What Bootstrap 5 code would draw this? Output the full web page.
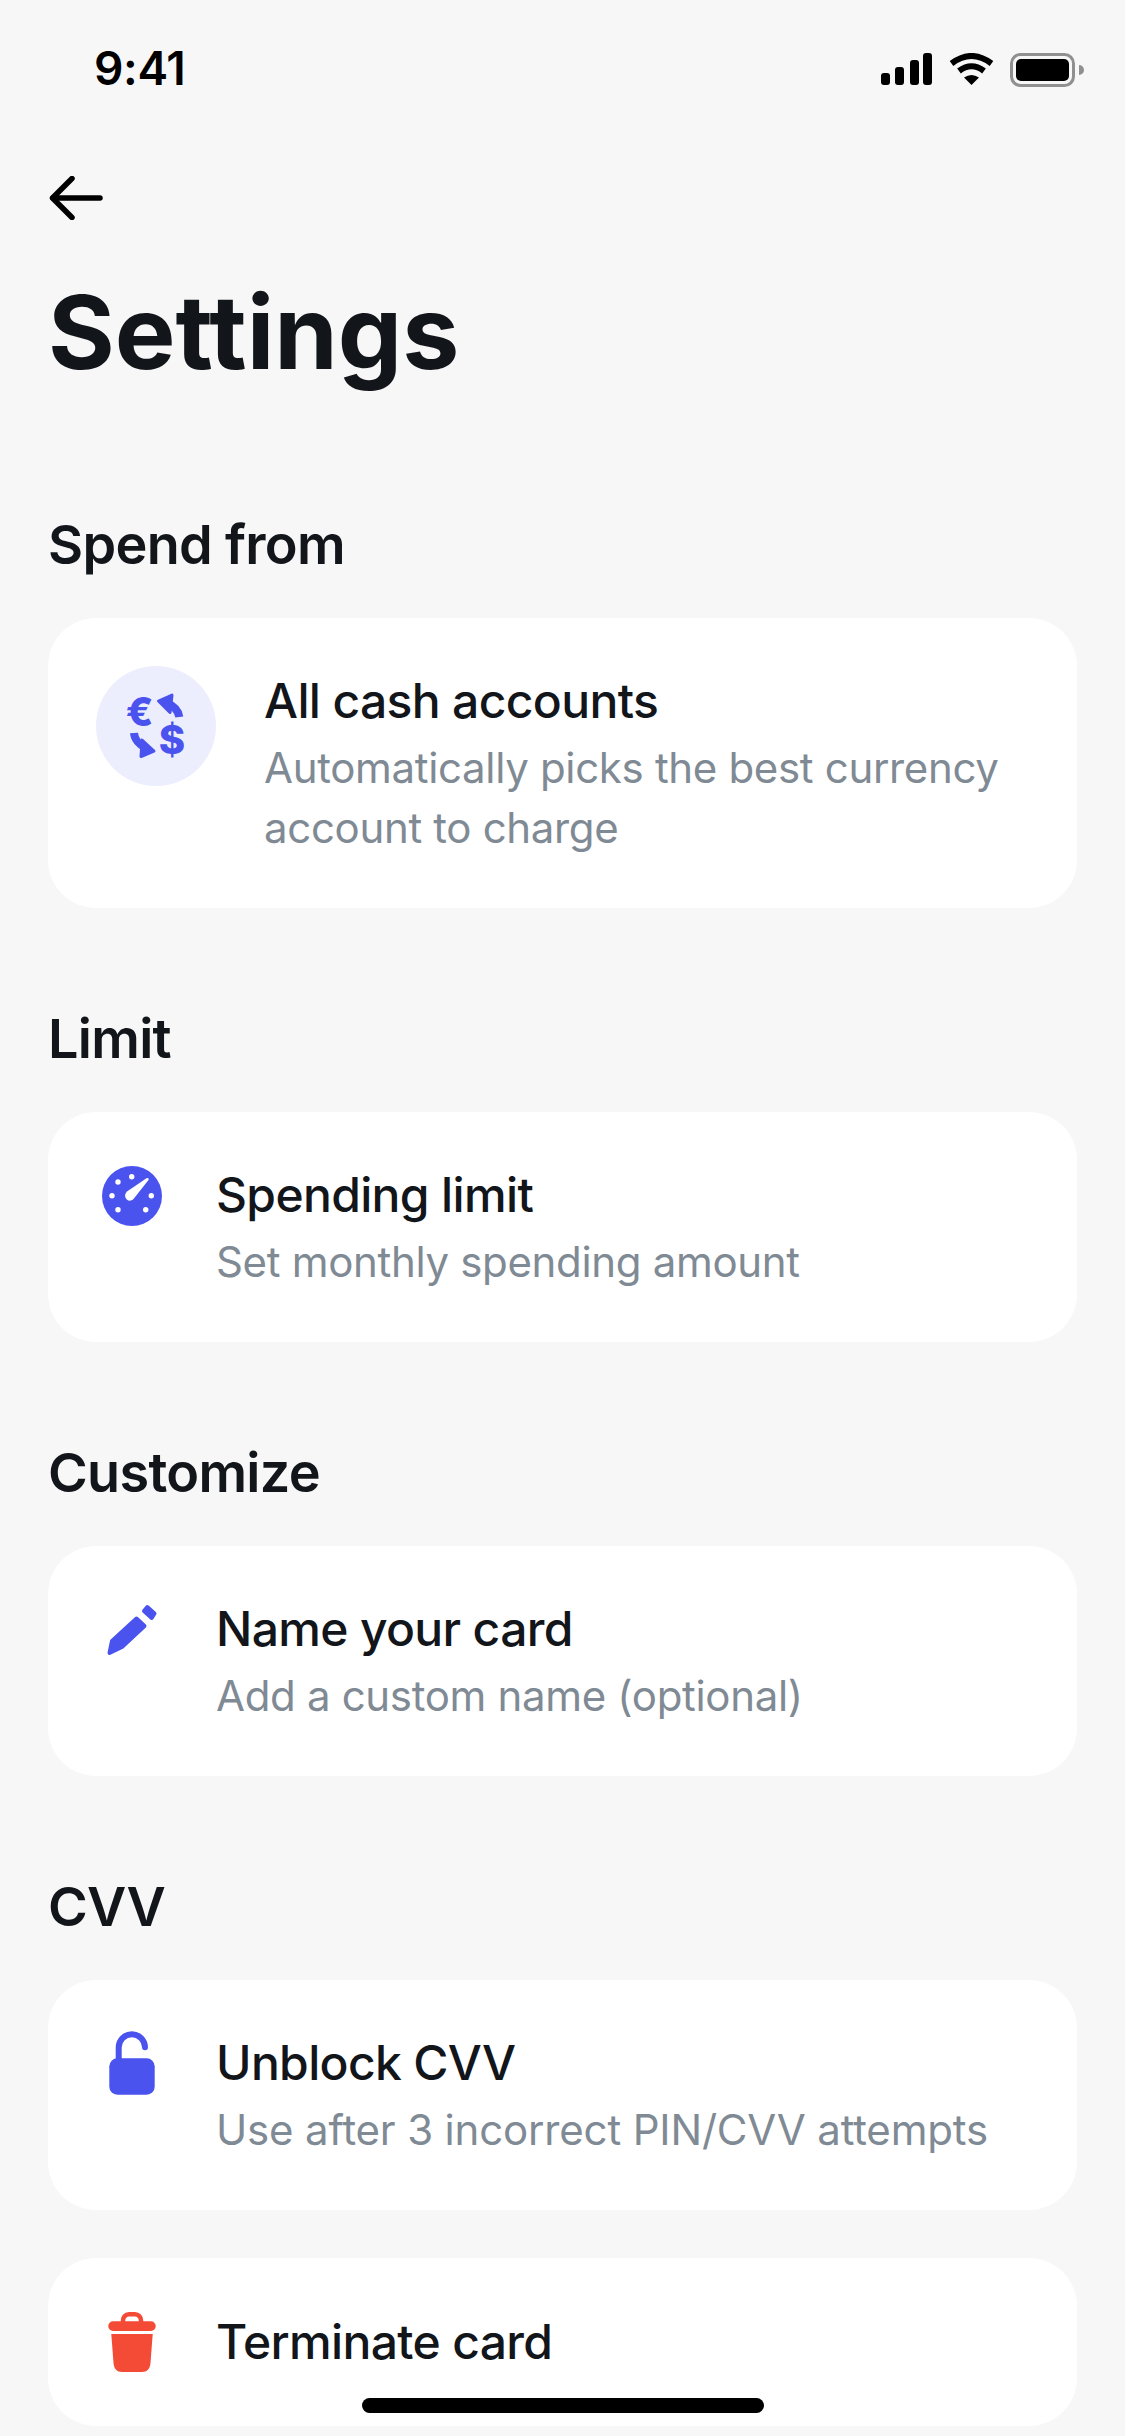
<!DOCTYPE html>
<html lang="en">

<head>
    <meta charset="UTF-8">
    <meta name="viewport" content="width=device-width, initial-scale=1.0">
    <title>Settings</title>
    <link href="https://cdn.jsdelivr.net/npm/bootstrap@5.3.2/dist/css/bootstrap.min.css" rel="stylesheet">
    <style>
        body {
            font-family: Inter, "Liberation Sans", sans-serif;
            background-color: #f7f7f7;
            color: #12151a;
            width: 1125px;
            height: 2436px;
            overflow: hidden;
            position: relative;
        }

        .status-bar {
            height: 132px;
            padding: 44px 41px 0 94px;
        }

        .status-time {
            font-size: 46px;
            line-height: 48px;
            font-weight: 600;
            color: #000;
            letter-spacing: -0.3px;
        }

        .status-icons {
            margin-top: 9px;
        }

        .back-row {
            height: 88px;
            padding: 44px 0 0 49px;
        }

        .page-title {
            font-size: 102px;
            line-height: 130px;
            font-weight: 700;
            margin: 47px 0 0 0;
            padding-left: 48px;
            color: #12151a;
        }

        .settings-list {
            padding: 0 48px;
            margin-top: 111px;
        }

        .section-title {
            font-size: 54px;
            line-height: 74px;
            font-weight: 600;
            letter-spacing: -0.7px;
            margin: 94px 0 36px 0;
            color: #12151a;
        }

        .section-title.first-title {
            margin-top: 0;
        }

        .setting-card {
            border: 0;
            border-radius: 48px;
            background: #fff;
            padding: 48px 48px 50px;
            gap: 48px;
        }

        .setting-card + .setting-card {
            margin-top: 48px;
        }

        .setting-card.single-line {
            padding-bottom: 48px;
        }

        .setting-icon {
            flex: 0 0 72px;
            width: 72px;
            height: 72px;
        }

        .setting-badge {
            flex: 0 0 120px;
            width: 120px;
            height: 120px;
        }

        .badge-sign {
            font-family: Inter, sans-serif;
            font-weight: 800;
            font-size: 40px;
            fill: #4b53ee;
            text-anchor: middle;
        }

        .setting-name {
            font-size: 48px;
            line-height: 72px;
            font-weight: 450;
            letter-spacing: -0.65px;
            margin: -1px 0 1px 0;
            color: #12151a;
        }

        .single-line .setting-name {
            margin: 0;
        }

        .setting-desc {
            font-size: 42px;
            line-height: 60px;
            letter-spacing: -0.33px;
            color: #808a94;
        }

        .setting-desc.wide-desc {
            letter-spacing: -0.17px;
        }

        .home-bar {
            position: absolute;
            left: 362px;
            top: 2398px;
            width: 402px;
            height: 15px;
            border-radius: 8px;
            background: #000;
        }
    </style>
</head>

<body>
    <div class="status-bar d-flex justify-content-between align-items-start">
        <div class="status-time">9:41</div>
        <div class="status-icons d-flex align-items-start">
            <svg width="52" height="32" viewBox="0 0 52 32" fill="#000">
                <rect x="0" y="20" width="9" height="12" rx="3"/>
                <rect x="14" y="14" width="9" height="18" rx="3"/>
                <rect x="29" y="7" width="9" height="25" rx="3"/>
                <rect x="42" y="0" width="9" height="32" rx="3"/>
            </svg>
            <svg class="ms-3" width="45" height="32" viewBox="0 0 45 32" fill="none" stroke="#000">
                <path d="M2.5 10.5Q22.5 -4.500 42.500 10.500" stroke-width="6"/>
                <path d="M10 18Q22.500 8.500 35 18" stroke-width="6"/>
                <path d="M22.500 32L15 24.500Q22.500 19.500 30 24.500Z" fill="#000" stroke="none"/>
            </svg>
            <svg class="ms-3" width="74" height="34" viewBox="0 0 74 34">
                <rect x="1.500" y="1.500" width="62" height="31" rx="9" fill="none" stroke="#909090" stroke-width="3"/>
                <rect x="6" y="6" width="53" height="22" rx="5" fill="#000"/>
                <path d="M69 12a5 5 0 0 1 0 10Z" fill="#909090"/>
            </svg>
        </div>
    </div>

    <div class="back-row">
        <svg class="d-block" width="54" height="44" viewBox="0 0 54 44" fill="none" stroke="#000" stroke-width="5.500" stroke-linecap="round" stroke-linejoin="round">
            <path d="M4 22H51"/>
            <path d="M23 2.500L3.500 22L23 41.500"/>
        </svg>
    </div>

    <h1 class="page-title">Settings</h1>

    <div class="settings-list">
        <h2 class="section-title first-title">Spend from</h2>
        <div class="card setting-card flex-row align-items-start">
            <svg class="setting-badge" viewBox="0 0 120 120">
                <circle cx="60" cy="60" r="60" fill="#eceefd"/>
                <text class="badge-sign" x="43.500" y="59.500">€</text>
                <text class="badge-sign" x="76" y="88">$</text>
                <path d="M83.300 51C82.500 45 78 40 71 37" fill="none" stroke="#4b53ee" stroke-width="8"/>
                <path d="M62.500 35L76 29L74 46.500Z" fill="#4b53ee" stroke="#4b53ee" stroke-width="3" stroke-linejoin="round"/>
                <path d="M38 67C38.500 73 43 79 50 82" fill="none" stroke="#4b53ee" stroke-width="8"/>
                <path d="M58 85L45 90.500L46 74Z" fill="#4b53ee" stroke="#4b53ee" stroke-width="3" stroke-linejoin="round"/>
            </svg>
            <div>
                <div class="setting-name">All cash accounts</div>
                <div class="setting-desc">Automatically picks the best currency<br>account to charge</div>
            </div>
        </div>

        <h2 class="section-title">Limit</h2>
        <div class="card setting-card flex-row align-items-start">
            <svg class="setting-icon" viewBox="0 0 72 72">
                <circle cx="36" cy="36" r="30" fill="#4b53ee"/>
                <g fill="#fff">
                    <circle cx="35.700" cy="16.700" r="2.700"/>
                    <circle cx="22" cy="22" r="2.700"/>
                    <circle cx="16" cy="35.700" r="2.700"/>
                    <circle cx="22" cy="49.700" r="2.700"/>
                    <circle cx="49.700" cy="49.700" r="2.700"/>
                    <circle cx="55.300" cy="35.700" r="2.700"/>
                    <path d="M31 31.500L50.500 18.200C52 17.400 53.200 18.400 52.500 20L37.500 39C32 44 26 36.500 31 31.500Z"/>
                </g>
            </svg>
            <div>
                <div class="setting-name">Spending limit</div>
                <div class="setting-desc">Set monthly spending amount</div>
            </div>
        </div>

        <h2 class="section-title">Customize</h2>
        <div class="card setting-card flex-row align-items-start">
            <svg class="setting-icon" viewBox="0 0 72 72">
                <g fill="#4b53ee" stroke="#4b53ee" stroke-width="4" stroke-linejoin="round">
                    <path d="M13.500 59L16 47L40.500 24.500L48.500 32L26 53Z"/>
                    <path d="M51.300 13L58.500 19.500L55.700 24L48 17Z"/>
                </g>
            </svg>
            <div>
                <div class="setting-name">Name your card</div>
                <div class="setting-desc">Add a custom name (optional)</div>
            </div>
        </div>

        <h2 class="section-title">CVV</h2>
        <div class="card setting-card flex-row align-items-start">
            <svg class="setting-icon" viewBox="0 0 72 72">
                <rect x="13.300" y="30.300" width="45.400" height="36.400" rx="8" fill="#4b53ee"/>
                <path d="M22.700 32V19.300a13.150 13 0 0 1 26.300 0" fill="none" stroke="#4b53ee" stroke-width="6" stroke-linecap="round"/>
            </svg>
            <div>
                <div class="setting-name">Unblock CVV</div>
                <div class="setting-desc wide-desc">Use after 3 incorrect PIN/CVV attempts</div>
            </div>
        </div>
        <div class="card setting-card single-line flex-row align-items-start">
            <svg class="setting-icon" viewBox="0 0 72 72">
                <rect x="12.300" y="15.300" width="47.400" height="9.700" rx="4.800" fill="#f44b37"/>
                <path d="M27 17V14.500a6 6 0 0 1 6 -6.200h6a6 6 0 0 1 6 6.200V17" fill="none" stroke="#f44b37" stroke-width="4.500"/>
                <path d="M15.300 28H56.700L54.500 57C54 63 51 66 46 66H26C21 66 18 63 17.500 57Z" fill="#f44b37"/>
            </svg>
            <div class="setting-name">Terminate card</div>
        </div>
    </div>

    <div class="home-bar"></div>

    <script src="https://cdn.jsdelivr.net/npm/bootstrap@5.3.2/dist/js/bootstrap.bundle.min.js"></script>
</body>

</html>
